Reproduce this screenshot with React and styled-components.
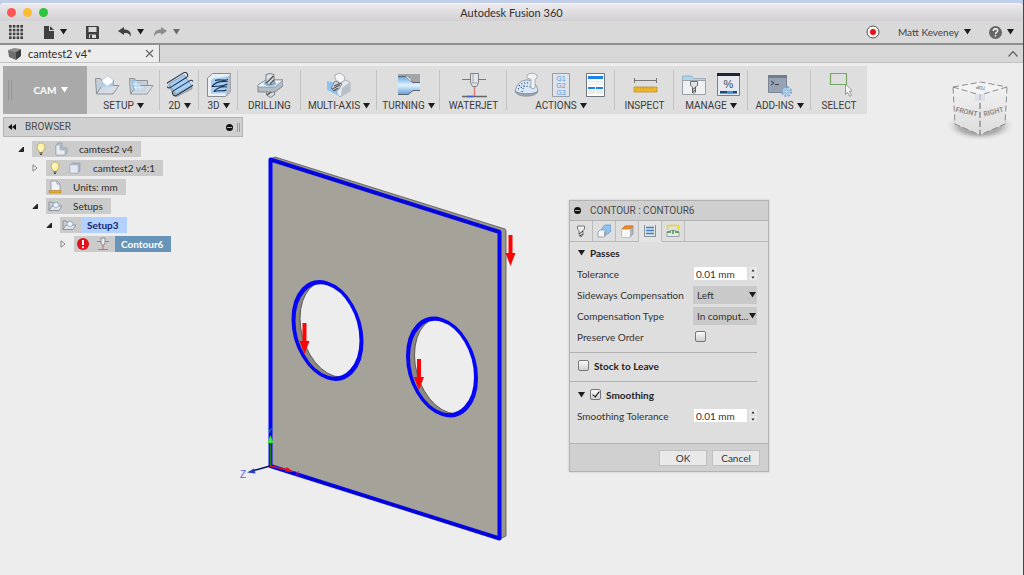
import React, { useState } from "react";
import styled, { createGlobalStyle, css } from "styled-components";

const GlobalStyle = createGlobalStyle`
  *, *::before, *::after { box-sizing: border-box; }
  html, body { margin: 0; padding: 0; }
  body {
    background: #ededed;
    color: #2c2c2c;
    font: 10px/14px Lato, "Noto Sans", sans-serif;
  }
  button, input, select { font: inherit; color: inherit; margin: 0; padding: 0; border: 0; background: none; border-radius: 0; }
  svg { display: block; flex: none; }
`;

const capsFont = `Roboto, "Noto Sans", sans-serif`;

/* ---------- window chrome ---------- */

const Window = styled.div`
  min-height: 100vh;
  display: flex;
  flex-direction: column;
  border-right: 1px solid #3c4768;
`;

const Desktop = styled.div`
  background: linear-gradient(#c3d0ea, #aebddb);
  padding-top: 3px;
`;

const TitleBar = styled.header`
  height: 18px;
  display: grid;
  grid-template-columns: 1fr auto 1fr;
  align-items: center;
  padding: 0 7px;
  background: linear-gradient(#ece9ec, #d2d0d2);
  border-top: 1px solid #f6f6f8;
  border-radius: 4px 4px 0 0;
`;

const Lights = styled.div`
  display: flex;
  gap: 7px;
`;

const Light = styled.button`
  width: 9px;
  height: 9px;
  border-radius: 50%;
  background: ${(p) => p.$color};
`;

const Title = styled.h1`
  margin: 0;
  font-size: 11px;
  line-height: 16px;
  font-weight: 400;
  color: #2f2f2f;
`;

const QuickBar = styled.nav`
  height: 24px;
  display: flex;
  align-items: center;
  justify-content: space-between;
  padding: 0 9px;
  background: #d9d9d9;
  border-bottom: 2px solid #8f8f8f;
`;

const QuickGroup = styled.div`
  display: flex;
  align-items: center;
  gap: ${(p) => p.$gap}px;
`;

const QuickButton = styled.button`
  display: flex;
  align-items: center;
  gap: 5px;
  color: ${(p) => (p.$dim ? "#8b8b8b" : "#3f3f3f")};
`;

const TabStrip = styled.div`
  height: 18px;
  display: flex;
  justify-content: space-between;
  background: #d7d7d7;
  border-bottom: 1px solid #c2c2c2;
`;

const DocTab = styled.div`
  width: 160px;
  display: flex;
  align-items: center;
  gap: 7px;
  padding: 0 5px 0 8px;
  background: #ececec;
  border-right: 1px solid #868686;
  font-size: 11px;
`;

const DocName = styled.span`
  flex: 1;
`;

const IconButton = styled.button`
  display: flex;
  align-items: center;
  justify-content: center;
  padding: ${(p) => p.$pad || 0}px;
`;

/* ---------- ribbon ---------- */

const Ribbon = styled.nav`
  align-self: flex-start;
  display: flex;
  height: 48px;
  margin: 3px 0 0 3px;
  background: #dedede;
`;

const Workspace = styled.button`
  width: 84px;
  position: relative;
  display: flex;
  align-items: center;
  justify-content: center;
  gap: 4px;
  padding-left: 11px;
  background: #a9a9a9;
  color: #fff;
  font-weight: 700;
  &::before {
    content: "";
    position: absolute;
    left: 5px;
    top: 14px;
    width: 4px;
    height: 20px;
    border: solid #959595;
    border-width: 0 1px;
  }
`;

const Group = styled.div`
  min-width: ${(p) => p.$w}px;
  display: flex;
  flex-direction: column;
  align-items: center;
  padding-top: 5px;
  background: linear-gradient(#c2c2c2, #c2c2c2) right 4px / 1px 40px no-repeat;
  &:last-child { background: none; }
`;

const Tools = styled.div`
  display: flex;
  gap: 8px;
  height: 28px;
`;

const GroupLabel = styled.button`
  display: flex;
  align-items: center;
  gap: 3px;
  white-space: nowrap;
  font-family: ${capsFont};
  color: #3a3a3a;
`;

/* ---------- canvas ---------- */

const Canvas = styled.main`
  flex: 1;
  position: relative;
  display: flex;
  align-items: flex-start;
  padding: 3px 0 0 3px;
`;

const Model = styled.svg`
  position: absolute;
  left: 230px;
  top: 36px;
`;

const Cube = styled.svg`
  position: absolute;
  right: 8px;
  top: -38px;
`;

/* ---------- browser ---------- */

const Browser = styled.aside`
  width: 240px;
  position: relative;
`;

const BrowserHead = styled.div`
  height: 20px;
  display: flex;
  align-items: center;
  gap: 9px;
  padding: 0 2px 0 4px;
  background: #d0d0d0;
  border: 1px solid #b4b4b4;
  font-family: ${capsFont};
  color: #4a4a4a;
`;

const Grow = styled.span`
  flex: 1;
`;

const Grip = styled.span`
  width: 3px;
  height: 9px;
  margin-left: -5px;
  border: solid #9a9a9a;
  border-width: 0 1px;
`;

const Tree = styled.ul`
  list-style: none;
  margin: 4px 0 0;
  padding: 0;
  display: flex;
  flex-direction: column;
  gap: 3px;
`;

const Node = styled.li`
  display: flex;
  align-items: center;
  height: 16px;
  padding-left: ${(p) => 15 + p.$level * 14}px;
`;

const Twist = styled.button`
  width: 14px;
  height: 16px;
  display: flex;
  align-items: center;
`;

const NodeIcons = styled.span`
  height: 16px;
  display: flex;
  align-items: center;
  gap: 6px;
  padding: 0 5px 0 2px;
  background: #cbcbcb;
`;

const NodeLabel = styled.span`
  height: 16px;
  line-height: 16px;
  padding: 0 8px 0 6px;
  background: #cbcbcb;
  ${(p) => p.$tone === "active" && css`background: #b3d1ff; color: #10246e; font-weight: 700;`}
  ${(p) => p.$tone === "selected" && css`background: #6794b8; color: #fff; font-weight: 700;`}
`;

/* ---------- dialog ---------- */

const Dialog = styled.form`
  position: absolute;
  left: 569px;
  top: 86px;
  width: 200px;
  background: #dedede;
  border: 1px solid #b2b2b2;
  box-shadow: 0 0 2px rgba(0, 0, 0, 0.2);
  color: #333;
`;

const DialogHead = styled.div`
  height: 20px;
  display: flex;
  align-items: center;
  gap: 9px;
  padding-left: 4px;
  background: #cfcfcf;
  border-bottom: 1px solid #b2b2b2;
  font-family: ${capsFont};
  color: #4a4a4a;
`;

const DialogTabs = styled.div`
  height: 21px;
  display: flex;
  background: linear-gradient(#b8b8b8, #b8b8b8) bottom / 100% 1px no-repeat;
`;

const DialogTab = styled.button`
  width: 23px;
  display: flex;
  align-items: center;
  justify-content: center;
  border-right: 1px solid #bcbcbc;
  border-bottom: 1px solid ${(p) => (p.$on ? "#e4e4e4" : "#b8b8b8")};
  background: ${(p) => (p.$on ? "#e4e4e4" : "transparent")};
`;

const Section = styled.section`
  margin-right: 11px;
  padding-bottom: 5px;
  & + & { padding-top: 2px; border-top: 1px solid #b0b0b0; }
`;

const Line = styled.div`
  height: 21px;
  display: flex;
  align-items: center;
  justify-content: space-between;
  padding-left: 7px;
`;

const Heading = styled.div`
  height: 21px;
  display: flex;
  align-items: center;
  gap: 5px;
  padding-left: 8px;
  font-weight: 700;
  color: #1e1e1e;
`;

const Field = styled.span`
  width: 64px;
  display: flex;
  align-items: center;
  gap: 2px;
  padding-left: ${(p) => p.$inset || 0}px;
`;

const NumberInput = styled.input`
  width: 53px;
  height: 13px;
  padding-left: 2px;
  background: #fff;
`;

const Spinner = styled.span`
  display: flex;
  flex-direction: column;
  gap: 1px;
`;

const SpinButton = styled.button`
  width: 8px;
  height: 6px;
  display: flex;
  align-items: center;
  justify-content: center;
  background: #e8e8e8;
`;

const SelectWrap = styled.span`
  width: 64px;
  position: relative;
  svg { position: absolute; right: 1px; top: 6px; pointer-events: none; }
`;

const Select = styled.select`
  appearance: none;
  display: block;
  width: 100%;
  height: 18px;
  padding-left: 4px;
  background: #c9c9c9;
`;

const Check = styled.input`
  appearance: none;
  flex: none;
  width: 11px;
  height: 11px;
  border: 1px solid #777;
  border-radius: 2px;
  background: linear-gradient(#fafafa, #cfcfcf);
  position: relative;
  &:checked::after {
    content: "";
    position: absolute;
    left: 3px;
    top: 0;
    width: 4px;
    height: 7px;
    border: solid #111;
    border-width: 0 1px 1px 0;
    transform: rotate(38deg);
  }
`;

const Footer = styled.footer`
  height: 28px;
  display: flex;
  align-items: center;
  justify-content: flex-end;
  gap: 5px;
  margin-top: 12px;
  padding-right: 8px;
  background: #d0d0d0;
  border-top: 1px solid #b2b2b2;
`;

const PushButton = styled.button`
  width: 48px;
  height: 16px;
  background: #e9e9e9;
  border: 1px solid #c0c0c0;
  line-height: 14px;
`;

/* ---------- small glyphs ---------- */

const Down = ({ color = "#1c1c1c", w = 7 }) => (
  <svg width={w} height="6" viewBox="0 0 7 6"><path d="M0 0h7L3.500 5.500z" fill={color} /></svg>
);

const Up = () => (
  <svg width="4" height="3" viewBox="0 0 4 3"><path d="M.5 2.500h3L2 .3z" fill="#222" /></svg>
);

const Minus = () => (
  <svg width="7" height="7" viewBox="0 0 7 7">
    <circle cx="3.500" cy="3.500" r="3.500" fill="#111" /><path d="M1 3.500h5" stroke="#b0b0b0" />
  </svg>
);

const Opened = () => (
  <svg width="7" height="7" viewBox="0 0 7 7"><path d="M5.500 1v4.500H1z" fill="#222" stroke="#222" /></svg>
);

const Closed = () => (
  <svg width="7" height="8" viewBox="0 0 7 8"><path d="M1 .8v6.400L5 4z" fill="#f4f4f4" stroke="#777" strokeWidth=".9" /></svg>
);

/* ---------- ribbon drawings ---------- */

const Tool = ({ children }) => (
  <IconButton type="button">
    <svg width="26" height="26" viewBox="0 0 26 26" fill="none" strokeLinejoin="round">{children}</svg>
  </IconButton>
);

const folderBase = (
  <>
    <path d="M1.500 6.500h5l1 2h12v13H2.500z" fill="#c8ced5" stroke="#8b9299" />
    <path d="M8 13.500h17L19 22H2.500z" fill="#d3d8dd" stroke="#8b9299" />
  </>
);

const drawings = {
  setup: (
    <>
      {folderBase}
      <path d="m8 8 6-4 5 4v6l-6 4-5-4z" fill="#fff" stroke="#b4bec8" strokeWidth=".6" />
      <path d="m8 9 5 5v4l-6 2V10zM13 14l6-4v4l-6 4z" fill="#a9cdec" />
      <path d="M9 14.500h15L18.500 21H4z" fill="#dbe0e5" opacity=".7" />
    </>
  ),
  folder: (
    <>
      {folderBase}
      <path d="M4 8h4v3h4v3h5v5H6z" fill="#a8d0f2" stroke="#7fadd6" strokeWidth=".7" />
      <path d="M8 9v9M12 12v6M5 12h7M6 15.500h10" stroke="#fff" strokeWidth=".7" />
      <path d="M10 14h14.500L19 21.500H4z" fill="#dbe0e5" opacity=".6" />
    </>
  ),
  two: (
    <>
      <path d="M2 12 17 3l8 11v3L9 25 2 15z" fill="#a9afb6" stroke="#838b94" strokeWidth=".6" />
      <path d="M2 12 17 3l8 11L9 22z" fill="#a6cff5" stroke="#8794a3" strokeWidth=".6" />
      <g stroke="#1b3354" transform="rotate(-32 13 13)">
        <rect x="1" y="4.500" width="24" height="5.500" rx="2.700" />
        <rect x="2" y="14.500" width="24" height="5.500" rx="2.700" />
      </g>
    </>
  ),
  three: (
    <>
      <path d="m1.500 6 5-4.500H24.500V20l-5 4.500h-18z" fill="#eceff2" stroke="#858c93" />
      <path d="m19.500 24 5-4.500V2l-4.500 4z" fill="#b5bcc4" />
      <path d="M5 8c5-4 10-1 16-4v16c-6 3-11 0-16 2z" fill="#a5cdf2" />
      <g stroke="#1b3354" strokeWidth="1.100">
        <path d="M9 8.500c5-2 8 1 13-1M21.500 9.500C15 9 9 10 6 14.500c6-1 10 1 15.500-2.500M21 15c-7-1-10 1-13 4.500c5-2 8 .5 12.500-1.500" />
      </g>
    </>
  ),
  drilling: (
    <>
      <path d="M9.500 18h8v5l-4 2.500-4-2.500z" fill="#d5d9dd" stroke="#666d74" strokeWidth=".8" />
      <path d="m10 23 7-5" stroke="#4c5258" strokeWidth="1.500" />
      <path d="m1 13 8-5h17v6l-8 6H1z" fill="#b3bbc3" stroke="#6f7880" strokeWidth=".8" />
      <path d="m1 13 8-5h17l-8 7H1z" fill="#f0f3f6" stroke="#7f8890" strokeWidth=".7" />
      <ellipse cx="13" cy="11.500" rx="6.500" ry="3" fill="#8ec3f3" />
      <path d="M9 2.500q4-2 8 0v9q-4 2.500-8 0z" fill="#dfe2e5" stroke="#666d74" strokeWidth=".8" />
      <path d="m9.500 11 7-7M13 12l4-4" stroke="#4c5258" strokeWidth="1.400" />
    </>
  ),
  multi: (
    <>
      <path d="M1 9 11 11l2 13-12-6z" fill="#8ec3f3" />
      <path d="m11 14 8-6 5 2v9l-10 6-3-3z" fill="#e3e8ed" stroke="#98a0a8" strokeWidth=".7" />
      <path d="m15 24 1-8 8-6v9z" fill="#b7bfc8" />
      <path d="m9 9 7 3-3 5-5 2-3-3z" fill="#d2d6da" stroke="#6d747b" strokeWidth=".8" />
      <path d="m6 17 8-4M8 14l7-3M7 19l5-3" stroke="#50565c" strokeWidth="1.100" />
      <path d="m9 3 5-2 5 4-1 4-4 2-5-4z" fill="#f5f6f7" stroke="#9aa0a6" strokeWidth=".8" />
    </>
  ),
  turning: (
    <>
      <path d="M2 2h22v10H2z" fill="#a2a6ab" />
      <path d="M2 5h9l6 6h7v8h-7l-5 4H2z" fill="url(#shaft)" />
      <path d="M2 4.500h9l5.500 6H24M2 22.500h10l5-4h7" stroke="#5e666e" />
      <path d="m10 3 7 6h-3l-4-4z" fill="#e6e8e9" stroke="#777" strokeWidth=".6" />
      <defs>
        <linearGradient id="shaft" x1="0" y1="0" x2="0" y2="1">
          <stop stopColor="#67a9e4" /><stop offset=".45" stopColor="#e5f3ff" /><stop offset="1" stopColor="#5a9bd8" />
        </linearGradient>
      </defs>
    </>
  ),
  waterjet: (
    <>
      <path d="M1 7.500h24" stroke="#777" />
      <path d="M9.500 1.500h8v9l-2 4h-4l-2-4z" fill="#e2e5e8" stroke="#666d74" strokeWidth=".8" />
      <path d="M12 2v9M10 11h7" stroke="#a5abb2" />
      <path d="M13.500 15v9" stroke="#e8796f" strokeWidth="1.500" />
      <path d="M1 24.500h25" stroke="#666" strokeWidth="1.500" /><path d="M6 24.500h6" stroke="#3c62d6" strokeWidth="1.500" />
    </>
  ),
  simulate: (
    <>
      <path d="M1 19C3 11 8 8 13 8s10 4 11 11c-3 4-20 4-23 0z" fill="#d5e7f8" stroke="#818a93" strokeWidth=".8" />
      <path d="M1 19c4 3.500 19 4 23 0-1 7-22 7-23 0z" fill="#9da6af" stroke="#7d868f" strokeWidth=".6" />
      <path d="M5 14c4-4 8-4 11-2M4 17c6-4 12-3 17 0M8 20l3-9" stroke="#27466f" strokeDasharray="1 2" strokeWidth="1.200" />
      <path d="M13 3q5-3.500 10 0v3l-2 1.500V16q-2 1.500-4 0V7.500L13 6z" fill="#f1f2f3" stroke="#9aa0a6" strokeWidth=".8" />
    </>
  ),
  gcode: (
    <>
      <path d="M4.500 1.500h17v23h-17z" fill="#dfe3e7" stroke="#979ea5" />
      <g fill="#4c98ea" fontFamily="Liberation Sans, sans-serif" fontSize="7" textAnchor="middle">
        <text x="13" y="9">G1</text><text x="13" y="16">G2</text><text x="13" y="23">G3</text>
      </g>
    </>
  ),
  sheet: (
    <>
      <path d="M4.500 1.500h18v23h-18z" fill="#fff" stroke="#6f767d" />
      <path d="M6 4h15v3H6zM6 15h7v2H6zM14 15h7v2h-7z" fill="#1a84ea" />
      <path d="M6 9.500h15M6 12h15" stroke="#dfe3e7" /><path d="M6 18h7v4H6zM14 18h7v4h-7z" fill="#e9ecef" />
    </>
  ),
  inspect: (
    <>
      <path d="M2.500 6v5M24.500 6v5M2.500 8.500h22" stroke="#777" />
      <path d="M2 15h23v5H2z" fill="#f0b526" stroke="#b98d2c" strokeWidth=".7" />
      <path d="M5.500 15v2M8.500 15v2M11.500 15v2M14.500 15v2M17.500 15v2M20.500 15v2" stroke="#c0932a" strokeWidth=".7" />
    </>
  ),
  library: (
    <>
      <path d="M1.500 4h9l2 2.500h12V12h-23z" fill="#a9d8ee" stroke="#93a7b4" strokeWidth=".8" />
      <path d="M1.500 8.500h23v14h-23z" fill="#eef0f1" stroke="#9aa1a8" />
      <path d="M9.500 9.500h7v4l-2 1.500v5l-1.500 1.500-1.500-1.500v-5l-2-1.500z" fill="#e0e2e4" stroke="#5c6268" strokeWidth=".9" />
      <path d="m11 18 4-3M11 20.500l4-3" stroke="#444" />
    </>
  ),
  template: (
    <>
      <path d="M2.500 1.500h22v22h-22z" fill="#e6eaee" stroke="#7a8189" />
      <path d="M2 1h23v3H2z" fill="#1e2430" />
      <text x="13.500" y="16" fill="#3b4d66" fontFamily="Liberation Sans, sans-serif" fontSize="11" textAnchor="middle">%</text>
      <path d="M5 19h17v2.500H5z" fill="#174a7c" /><path d="M12 19h6v2.500h-6z" fill="#3d96dc" />
    </>
  ),
  addins: (
    <>
      <path d="M1.500 3.500h18v17h-18z" fill="#97a2b2" stroke="#7d8797" />
      <path d="M1 3h19v3H1z" fill="#727c8b" />
      <path d="m4 9 3 2-3 2M8 12.500h4" stroke="#39424f" />
      <circle cx="19.500" cy="19.500" r="4" stroke="#7fa6cc" strokeWidth="3" strokeDasharray="1.800 1.340" />
      <circle cx="19.500" cy="19.500" r="3.700" fill="#a9cdf0" /><circle cx="19.500" cy="19.500" r="1.500" fill="#f2f6fa" stroke="#6f93b8" strokeWidth=".7" />
    </>
  ),
  select: (
    <>
      <path d="M4.500 1.500h16v11h-16z" stroke="#74a765" strokeWidth="1.200" />
      <path d="m19.500 12 7 7-3 .3 2 4-2 1-2-4-2 2.200z" fill="#f5f5f5" stroke="#8c8c8c" strokeWidth=".9" />
    </>
  ),
};

const ribbonGroups = [
  { label: "SETUP", w: 73, menu: true, tools: ["setup", "folder"] },
  { label: "2D", w: 39, menu: true, tools: ["two"] },
  { label: "3D", w: 39, menu: true, tools: ["three"] },
  { label: "DRILLING", w: 63, tools: ["drilling"] },
  { label: "MULTI-AXIS", w: 76, menu: true, tools: ["multi"] },
  { label: "TURNING", w: 63, menu: true, tools: ["turning"] },
  { label: "WATERJET", w: 67, tools: ["waterjet"] },
  { label: "ACTIONS", w: 108, menu: true, tools: ["simulate", "gcode", "sheet"] },
  { label: "INSPECT", w: 59, tools: ["inspect"] },
  { label: "MANAGE", w: 74, menu: true, tools: ["library", "template"] },
  { label: "ADD-INS", w: 63, menu: true, tools: ["addins"] },
  { label: "SELECT", w: 56, tools: ["select"] },
];

/* ---------- tree drawings ---------- */

const Small = ({ children }) => (
  <svg width="14" height="14" viewBox="0 0 14 14" fill="none" strokeLinejoin="round">{children}</svg>
);

const treeIcons = {
  bulb: (
    <>
      <path d="M5 9C1.500 6 3 1 7 1s5.500 5 2 8l-.5 1.500h-3z" fill="#fdf2a4" stroke="#b9a552" strokeWidth=".8" />
      <path d="M5.500 11h3M6 12.500h2" stroke="#444" /><path d="M6 3v5" stroke="#fff" />
    </>
  ),
  assembly: (
    <>
      <path d="m2 3 2-2h4v5h5v5l-2 2H2z" fill="#b9c2cb" stroke="#919ba5" strokeWidth=".8" />
      <path d="M2 3h4v5h5v5H2z" fill="#e7ecf1" stroke="#a2abb5" strokeWidth=".7" />
    </>
  ),
  body: (
    <>
      <path d="m2 4 2-2h8v8l-2 2H2z" fill="#aab6c2" stroke="#98a3b0" strokeWidth=".8" />
      <path d="M2 4h8v8H2z" fill="#e1e8ef" stroke="#b0bac4" strokeWidth=".6" />
    </>
  ),
  units: (
    <>
      <path d="M3 1h6l3 3v7H3z" fill="#eef2f6" stroke="#8b95a0" strokeWidth=".8" /><path d="M9 1v3h3" stroke="#8b95a0" strokeWidth=".8" />
      <path d="M1 10.500h12V13H1z" fill="#e6a928" stroke="#b07f1b" strokeWidth=".5" />
    </>
  ),
  setup: (
    <>
      <path d="M1 3h3l1 1h5v7H1z" fill="#c6ccd2" stroke="#7f878f" strokeWidth=".8" />
      <path d="M4 7h10l-3 4.500H1z" fill="#e1e5e9" stroke="#7f878f" strokeWidth=".8" />
      <path d="m5 5 3-2 3 2v2L8 9 5 7z" fill="#e9f3fb" stroke="#7d9cb8" strokeWidth=".7" />
    </>
  ),
  error: (
    <>
      <circle cx="7" cy="7" r="6" fill="#e2101b" /><path d="M7 3v5" stroke="#fff" strokeWidth="2" /><circle cx="7" cy="10.300" r="1.100" fill="#fff" />
    </>
  ),
  jet: (
    <>
      <path d="M1 4.500h12M2 12.500h10" stroke="#8b8b8b" /><path d="M5 1h4v5L8 8H6L5 6z" fill="#e8eaec" stroke="#777e85" strokeWidth=".8" />
      <path d="M7 8v4" stroke="#e4574a" />
    </>
  ),
};

const treeNodes = [
  { level: 0, open: true, icons: ["bulb", "assembly"], label: "camtest2 v4" },
  { level: 1, open: false, icons: ["bulb", "body"], label: "camtest2 v4:1" },
  { level: 1, icons: ["units"], label: "Units: mm" },
  { level: 1, open: true, icons: ["setup"], label: "Setups" },
  { level: 2, open: true, icons: ["setup"], label: "Setup3", tone: "active" },
  { level: 3, open: false, icons: ["error", "jet"], label: "Contour6", tone: "selected" },
];

/* ---------- dialog tab drawings ---------- */

const dialogTabs = [
  { name: "Tool", art: <><path d="M3.500 2h7v3L9 6.500v4L7 13l-2-2.500v-4L3.500 5z" fill="#ececec" stroke="#777" /><path d="m5 10 4-3M5.500 12l3.500-2" stroke="#333" /></> },
  { name: "Geometry", art: <><path d="m5 4 3-3h6v6l-3 3H5z" fill="#8ec3f0" stroke="#6a9ac6" strokeWidth=".8" /><path d="m1 8 2-2h6v5l-2 2H1z" fill="#f3f6f8" stroke="#8c959e" strokeWidth=".8" /><path d="m7 13 2-2V6L7 8z" fill="#9aa7b3" /></> },
  { name: "Heights", art: <><path d="m2 5 3-3h8v8l-3 3H2z" fill="#aeb5bc" stroke="#8c959e" strokeWidth=".8" /><path d="M2 5h8v8H2z" fill="#f7f7f7" /><path d="m2 5 3-3h8l-3 3z" fill="#f28c28" stroke="#bf6512" strokeWidth=".6" /></> },
  { name: "Passes", on: true, art: <><path d="M1.500 1v12M12.500 1v12M1 12.500h12" stroke="#8a9299" /><path d="M3 3.500h8M3 6.500h8M3 9.500h8" stroke="#3b82c8" strokeWidth="1.300" /></> },
  { name: "Linking", art: <><path d="M1.500 6V1.500h11V6" stroke="#ecd91a" strokeWidth="1.500" /><path d="M1 8h3.500V6.500h5V8H13v4.500H1z" fill="#e8e8e8" stroke="#8c9299" strokeWidth=".8" /><path d="M1 8h4M9 8h4M7 6v4" stroke="#3f9a45" strokeWidth="1.500" /></> },
];

/* ---------- plate ---------- */

const Hole = ({ id, x, y }) => (
  <g transform={`matrix(1 .313 0 1 ${x} ${y})`}>
    <clipPath id={id}><ellipse rx="34" ry="47" /></clipPath>
    <ellipse rx="34" ry="47" fill="#8d8a82" />
    <g clipPath={`url(#${id})`}>
      <ellipse cx="6.500" cy="-3.500" rx="34" ry="47" fill="#ededed" stroke="#4d4b46" strokeWidth=".8" />
    </g>
    <ellipse rx="34" ry="47" fill="none" stroke="#0606f4" strokeWidth="4" />
  </g>
);

const Arrow = ({ x, y }) => (
  <path transform={`translate(${x} ${y})`} d="M-2 0h4v18h3L0 31l-5-13h3z" fill="#fb0606" />
);

const PlateModel = () => (
  <Model width="300" height="400" viewBox="230 150 300 400" role="img" aria-label="Plate with two holes">
    <path d="m275 157 230 72 1 2v305l-6 3-230-380z" fill="#9b988f" stroke="#55534d" strokeWidth=".8" />
    <path d="M270 159l230 73v307L270 466z" fill="#a5a29a" />
    <Hole id="holeA" x={327.5} y={330.5} />
    <Hole id="holeB" x={442} y={367} />
    <path d="M270.500 159.500 499.500 232v306.500L270.500 466z" fill="none" stroke="#0606f4" strokeWidth="4" strokeLinejoin="round" />
    <path d="M271 160 499 232M272 466.500l226 71.500" fill="none" stroke="#05059c" strokeWidth="1" />
    <Arrow x={510.5} y={235} /><Arrow x={304.5} y={323} /><Arrow x={419} y={359} />
    <path d="M270.500 466v-24" stroke="#17801c" strokeWidth="1.500" /><path d="m270.500 435 3 8h-6z" fill="#3ee83e" />
    <path d="m270 466 18 4" stroke="#d81818" strokeWidth="1.500" /><path d="m294 472-9-.5 1.500-4.500z" fill="#e81414" />
    <path d="m270 466-18 5" stroke="#0a0a6e" strokeWidth="1.500" /><path d="m247 472.500 7-4 1.500 5z" fill="#2b3bc0" />
    <g fontFamily="Liberation Sans, sans-serif" fontSize="10" textAnchor="middle">
      <text x="243" y="478" fill="#5a63f0">Z</text>
      <text x="270" y="433" fill="#149a9a" fontSize="8">Y</text>
      <text x="297" y="476" fill="#b01a5a" fontSize="8">X</text>
    </g>
  </Model>
);

const ViewCube = () => (
  <Cube width="70" height="68" viewBox="945 76 70 68" role="img" aria-label="View cube">
    <defs>
      <radialGradient id="shade"><stop stopColor="#8d8d8d" /><stop offset=".6" stopColor="#b0b0b0" /><stop offset="1" stopColor="#ededed" stopOpacity="0" /></radialGradient>
      <linearGradient id="face" x1="0" y1="0" x2="0" y2="1"><stop stopColor="#f1f1f1" /><stop offset="1" stopColor="#dcdcdc" /></linearGradient>
    </defs>
    <ellipse cx="980" cy="126" rx="35" ry="15" fill="url(#shade)" />
    <path d="m953 87 27 8v40l-25-11z" fill="url(#face)" /><path d="m1007 87-27 8v40l25-11z" fill="url(#face)" />
    <path d="m953 87 28-5 26 5-27 8z" fill="#f3f3f3" />
    <path d="m953 87 27 8v40l-25-11zM1007 87l-27 8v40l25-11zM953 87l28-5 26 5" fill="none" stroke="#8c8c8c" strokeWidth="1" strokeDasharray="6 3" />
    <path d="M975 94h10v7h-10z" fill="#d9dce6" opacity=".7" />
    <g fontFamily="Roboto, sans-serif" fontSize="7" fontWeight="500" fill="#808080" textAnchor="middle">
      <text transform="translate(966 114) rotate(12)">FRONT</text>
      <text transform="translate(994 114) rotate(-14)">RIGHT</text>
      <text transform="translate(981 86) rotate(190)" fontSize="5">TOP</text>
    </g>
  </Cube>
);

/* ---------- composed parts ---------- */

const Spin = ({ name }) => (
  <Spinner>
    <SpinButton type="button" aria-label={`Increase ${name}`}><Up /></SpinButton>
    <SpinButton type="button" aria-label={`Decrease ${name}`}>
      <svg width="4" height="3" viewBox="0 0 4 3"><path d="M.5.500h3L2 2.700z" fill="#222" /></svg>
    </SpinButton>
  </Spinner>
);

const NumberLine = ({ id, label }) => (
  <Line>
    <label htmlFor={id}>{label}</label>
    <Field $inset={1}>
      <NumberInput id={id} type="text" defaultValue="0.01 mm" />
      <Spin name={label} />
    </Field>
  </Line>
);

const SelectLine = ({ id, label, value }) => (
  <Line>
    <label htmlFor={id}>{label}</label>
    <SelectWrap>
      <Select id={id} defaultValue={value}><option>{value}</option></Select>
      <Down />
    </SelectWrap>
  </Line>
);

function ContourDialog() {
  const [smoothing, setSmoothing] = useState(true);
  return (
    <Dialog onSubmit={(e) => e.preventDefault()}>
      <DialogHead><Minus /><span>CONTOUR : CONTOUR6</span></DialogHead>
      <DialogTabs>
        {dialogTabs.map((t) => (
          <DialogTab key={t.name} type="button" aria-label={t.name} $on={t.on}><Small>{t.art}</Small></DialogTab>
        ))}
      </DialogTabs>
      <Section>
        <Heading><Down /><span>Passes</span></Heading>
        <NumberLine id="tolerance" label="Tolerance" />
        <SelectLine id="sideways" label="Sideways Compensation" value="Left" />
        <SelectLine id="comp-type" label="Compensation Type" value="In comput..." />
        <Line>
          <label htmlFor="preserve">Preserve Order</label>
          <Field $inset={2}><Check id="preserve" type="checkbox" /></Field>
        </Line>
      </Section>
      <Section>
        <Heading><Check id="stock" type="checkbox" /><label htmlFor="stock">Stock to Leave</label></Heading>
      </Section>
      <Section>
        <Heading>
          <Down />
          <Check id="smoothing" type="checkbox" checked={smoothing} onChange={(e) => setSmoothing(e.target.checked)} />
          <label htmlFor="smoothing">Smoothing</label>
        </Heading>
        <NumberLine id="smoothing-tolerance" label="Smoothing Tolerance" />
      </Section>
      <Footer>
        <PushButton type="submit">OK</PushButton>
        <PushButton type="button">Cancel</PushButton>
      </Footer>
    </Dialog>
  );
}

export default function App() {
  return (
    <Window>
      <GlobalStyle />
      <Desktop>
        <TitleBar>
          <Lights>
            <Light type="button" aria-label="Close" $color="#fc5753" />
            <Light type="button" aria-label="Minimize" $color="#fdbc33" />
            <Light type="button" aria-label="Zoom" $color="#2bc63c" />
          </Lights>
          <Title>Autodesk Fusion 360</Title>
        </TitleBar>
      </Desktop>

      <QuickBar>
        <QuickGroup $gap={19}>
          <QuickButton type="button" aria-label="Data panel">
            <svg width="14" height="14" viewBox="0 0 14 14" fill="currentColor">
              {[0, 4, 8, 12].flatMap((x) => [0, 4, 8, 12].map((y) => <rect key={`${x}-${y}`} x={x * 0.95} y={y * 0.95} width="2.600" height="2.600" />))}
            </svg>
          </QuickButton>
          <QuickButton type="button" aria-label="File">
            <svg width="13" height="13" viewBox="0 0 13 13"><path d="M2 0h5v5h5v8H2zM8 0l4 4H8z" fill="currentColor" /></svg>
            <Down />
          </QuickButton>
          <QuickButton type="button" aria-label="Save">
            <svg width="13" height="13" viewBox="0 0 13 13"><path d="M0 0h12l1 1v12H0zM2.500 1v5h8V1zM3 8.500V12h7V8.500z" fill="currentColor" fillRule="evenodd" /><path d="M4 9h2v3H4z" fill="currentColor" /></svg>
          </QuickButton>
          <QuickGroup $gap={10}>
            <QuickButton type="button" aria-label="Undo">
              <svg width="14" height="10" viewBox="0 0 14 10"><path d="M0 4 6 0v2.500c5 0 7 2 7 7-2-3-3-3.500-7-3.500v2z" fill="currentColor" /></svg>
              <Down />
            </QuickButton>
            <QuickButton type="button" aria-label="Redo" $dim>
              <svg width="14" height="10" viewBox="0 0 14 10"><path d="M13 4 7 0v2.500c-5 0-7 2-7 7C2 6.500 3 6 7 6v2z" fill="currentColor" /></svg>
              <Down color="#6b6b6b" />
            </QuickButton>
          </QuickGroup>
        </QuickGroup>
        <QuickGroup $gap={18}>
          <QuickButton type="button" aria-label="Record">
            <svg width="14" height="14" viewBox="0 0 14 14"><circle cx="7" cy="7" r="6" fill="#f6f6f6" stroke="#555" /><circle cx="7" cy="7" r="3" fill="#e31414" /></svg>
          </QuickButton>
          <QuickButton type="button">Matt Keveney<Down /></QuickButton>
          <QuickButton type="button" aria-label="Help">
            <svg width="13" height="13" viewBox="0 0 13 13">
              <circle cx="6.500" cy="6.500" r="6.500" fill="#666" />
              <path d="M4.300 5q0-2.200 2.200-2.200T8.700 4.800c0 1.500-2.200 1.500-2.200 3.200M6.500 9v1.500" fill="none" stroke="#fff" strokeWidth="1.400" />
            </svg>
            <Down />
          </QuickButton>
        </QuickGroup>
      </QuickBar>

      <TabStrip>
        <DocTab>
          <svg width="13" height="14" viewBox="0 0 13 14">
            <path d="m0 3 6-2 7 1-5 3z" fill="#8d8d8d" /><path d="m0 3 8 2v8L1 10z" fill="#6f6f6f" /><path d="m8 5 5-3v7l-5 4z" fill="#3f3f3f" />
          </svg>
          <DocName>camtest2 v4*</DocName>
          <IconButton type="button" aria-label="Close tab">
            <svg width="9" height="9" viewBox="0 0 9 9"><path d="m1 1 7 7M8 1 1 8" stroke="#666" strokeWidth="1.200" /></svg>
          </IconButton>
        </DocTab>
        <IconButton type="button" aria-label="Collapse toolbar" $pad={5}>
          <svg width="10" height="6" viewBox="0 0 10 6"><path d="m.5 5.500 4.500-5 4.500 5" fill="none" stroke="#666" strokeWidth="1.300" /></svg>
        </IconButton>
      </TabStrip>

      <Ribbon>
        <Workspace type="button">CAM<Down color="#fff" /></Workspace>
        {ribbonGroups.map((g) => (
          <Group key={g.label} $w={g.w}>
            <Tools>{g.tools.map((t) => <Tool key={t}>{drawings[t]}</Tool>)}</Tools>
            <GroupLabel type="button">{g.label}{g.menu && <Down />}</GroupLabel>
          </Group>
        ))}
      </Ribbon>

      <Canvas>
        <PlateModel />
        <ViewCube />
        <Browser>
          <BrowserHead>
            <svg width="8" height="6" viewBox="0 0 8 6"><path d="M4 0v6L0 3zM8 0v6L4 3z" fill="#111" /></svg>
            <span>BROWSER</span>
            <Grow />
            <Minus />
            <Grip />
          </BrowserHead>
          <Tree>
            {treeNodes.map((n) => (
              <Node key={n.label} $level={n.level}>
                <Twist type="button" aria-label={`Toggle ${n.label}`}>{n.open === true ? <Opened /> : n.open === false ? <Closed /> : null}</Twist>
                <NodeIcons>{n.icons.map((i) => <Small key={i}>{treeIcons[i]}</Small>)}</NodeIcons>
                <NodeLabel $tone={n.tone}>{n.label}</NodeLabel>
              </Node>
            ))}
          </Tree>
        </Browser>
        <ContourDialog />
      </Canvas>
    </Window>
  );
}
